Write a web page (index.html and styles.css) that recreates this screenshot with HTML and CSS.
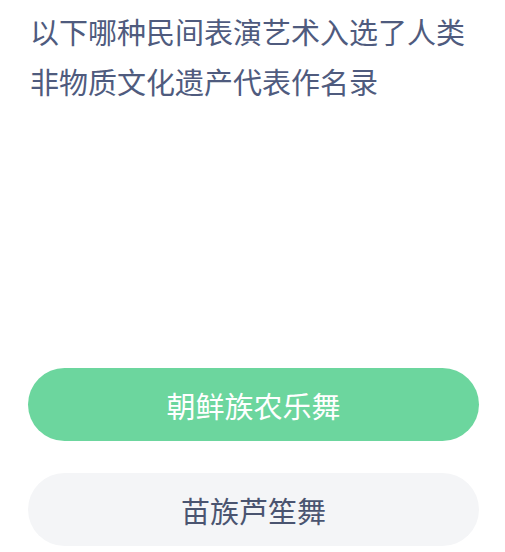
FILE: index.html
```html
<!DOCTYPE html>
<html lang="zh-CN">
<head>
  <meta charset="UTF-8" />
  <title>答题</title>
  <link rel="stylesheet" href="styles.css">
</head>
<body>
  <div class="container">
    <div class="question">以下哪种民间表演艺术入选了人类非物质文化遗产代表作名录</div>

    <div class="picture"></div>

    <div class="options">
      <button class="option correct">朝鲜族农乐舞</button>
      <button class="option">苗族芦笙舞</button>
    </div>
  </div>
</body>
</html>
```

FILE: styles.css
```css
* {
  box-sizing: border-box;
}

body {
  background-color: #ffffff;
  font-family: "Noto Sans CJK SC", "Noto Sans", sans-serif;
  margin: 0;
  padding: 0;
}

.container {
  padding: 6px 26px 0 28px;
}

.question {
  padding: 0 0 0 2px;
  color: #4f5b7e;
  font-size: 29px;
  line-height: 50px;
}

.picture {
  height: 262px;
}

.options {
  display: flex;
  flex-direction: column;
  gap: 32px;
}

.option {
  height: 73px;
  width: 100%;
  border: none;
  border-radius: 37px;
  background-color: #f4f5f7;
  color: #4a5470;
  font-family: inherit;
  font-size: 29px;
  padding: 0;
}

.option.correct {
  background-color: #6cd69e;
  color: #ffffff;
}
```
